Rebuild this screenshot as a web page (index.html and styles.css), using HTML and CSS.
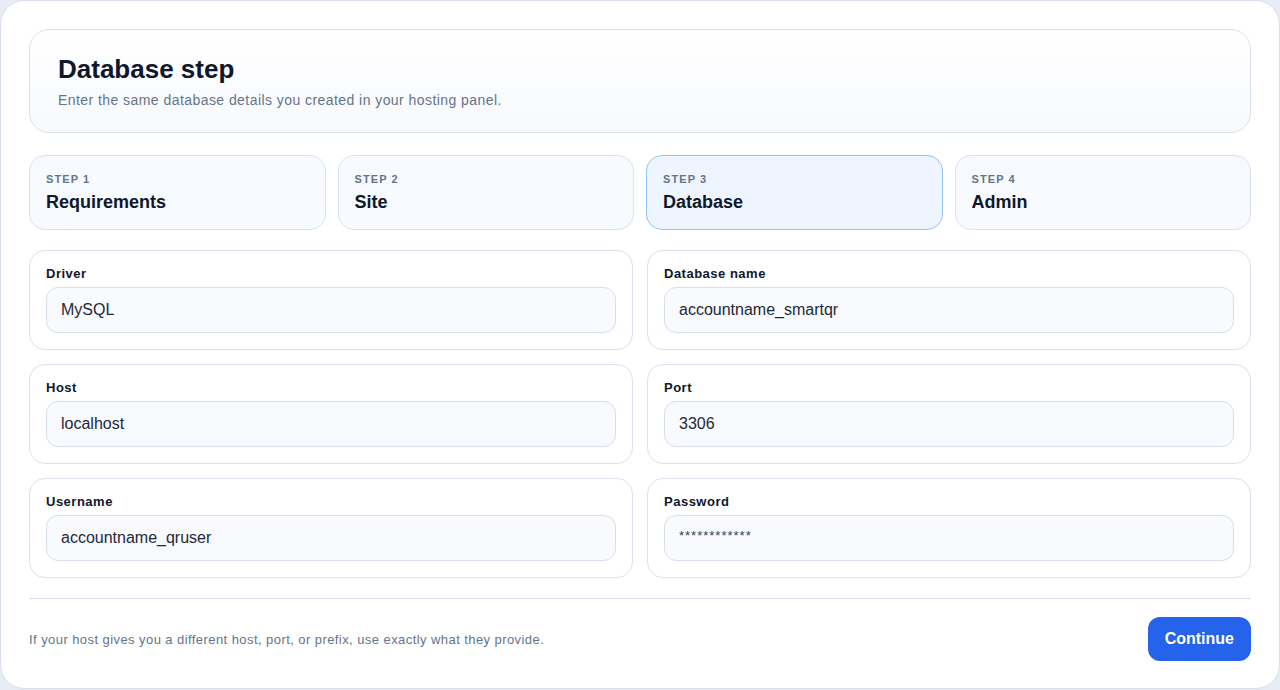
FILE: index.html
```html
<!DOCTYPE html>
<html>
<head>
<meta charset="utf-8">
<link rel="stylesheet" href="styles.css">
</head>
<body>
<div class="card">
  <div class="header">
    <h1>Database step</h1>
    <p>Enter the same database details you created in your hosting panel.</p>
  </div>
  <div class="steps">
    <div class="step"><div class="step-num">STEP 1</div><div class="step-name">Requirements</div></div>
    <div class="step"><div class="step-num">STEP 2</div><div class="step-name">Site</div></div>
    <div class="step active"><div class="step-num">STEP 3</div><div class="step-name">Database</div></div>
    <div class="step"><div class="step-num">STEP 4</div><div class="step-name">Admin</div></div>
  </div>
  <div class="fields">
    <div class="field"><label>Driver</label><div class="input">MySQL</div></div>
    <div class="field"><label>Database name</label><div class="input">accountname_smartqr</div></div>
    <div class="field"><label>Host</label><div class="input">localhost</div></div>
    <div class="field"><label>Port</label><div class="input">3306</div></div>
    <div class="field"><label>Username</label><div class="input">accountname_qruser</div></div>
    <div class="field"><label>Password</label><div class="input pw">************</div></div>
  </div>
  <div class="footer">
    <p>If your host gives you a different host, port, or prefix, use exactly what they provide.</p>
    <button class="btn">Continue</button>
  </div>
</div>
</body>
</html>
```
FILE: styles.css
```css
* { box-sizing: border-box; }
html, body { margin: 0; padding: 0; }
body {
  background: #e8edf5;
  font-family: "Liberation Sans", Arial, Helvetica, sans-serif;
  color: #0f172a;
}
.card {
  width: 1280px;
  height: 689px;
  background: #ffffff;
  border: 1px solid #d6dfeb;
  border-radius: 24px;
  padding: 28px 28px 0 28px;
}
.header {
  border: 1px solid #d9e2ee;
  border-radius: 20px;
  background: linear-gradient(180deg, #ffffff 0%, #f7f9fd 100%);
  padding: 24px 28px 22px 28px;
  height: 104px;
}
.header h1 {
  margin: 0 0 6px 0;
  font-size: 26px;
  line-height: 30px;
  font-weight: 700;
  color: #0f172a;
}
.header p {
  margin: 0;
  font-size: 14px;
  line-height: 20px;
  letter-spacing: 0.44px;
  color: #64748b;
}
.steps {
  margin-top: 22px;
  display: grid;
  grid-template-columns: repeat(4, 1fr);
  gap: 12px;
}
.step {
  height: 75px;
  border: 1px solid #d9e2ee;
  border-radius: 16px;
  background: #f7faff;
  padding: 16px 16px 0 16px;
}
.step.active {
  background: #eef5ff;
  border-color: #93c5fd;
}
.step-num {
  font-size: 11px;
  line-height: 14px;
  font-weight: 700;
  letter-spacing: 0.1em;
  color: #64748b;
}
.step-name {
  margin-top: 5px;
  font-size: 18px;
  line-height: 22px;
  font-weight: 700;
  color: #0f172a;
}
.fields {
  margin-top: 20px;
  display: grid;
  grid-template-columns: 1fr 1fr;
  column-gap: 14px;
  row-gap: 14px;
}
.field {
  border: 1px solid #d9e2ee;
  border-radius: 16px;
  background: #ffffff;
  padding: 15px 16px 16px 16px;
  height: 100px;
}
.field label {
  display: block;
  font-size: 13px;
  line-height: 15px;
  font-weight: 700;
  letter-spacing: 0.5px;
  color: #0f172a;
  margin-bottom: 6px;
}
.input {
  height: 46px;
  border: 1px solid #d6dfeb;
  border-radius: 12px;
  background: #f8fafd;
  padding: 0 14px;
  display: flex;
  align-items: center;
  font-size: 16px;
  color: #1e293b;
}
.input.pw {
  font-size: 13px;
  align-items: flex-start;
  padding-top: 12px;
  letter-spacing: 1px;
  color: #334155;
}
.footer {
  margin-top: 20px;
  border-top: 1px solid #d6dfeb;
  padding-top: 18px;
  display: flex;
  justify-content: space-between;
  align-items: center;
}
.footer p {
  margin: 0;
  font-size: 13px;
  letter-spacing: 0.43px;
  color: #64748b;
}
.btn {
  height: 44px;
  padding: 0 17px;
  border: none;
  border-radius: 12px;
  background: #2563eb;
  color: #ffffff;
  font-family: "Liberation Sans", Arial, sans-serif;
  font-size: 16px;
  font-weight: 700;
}
```
